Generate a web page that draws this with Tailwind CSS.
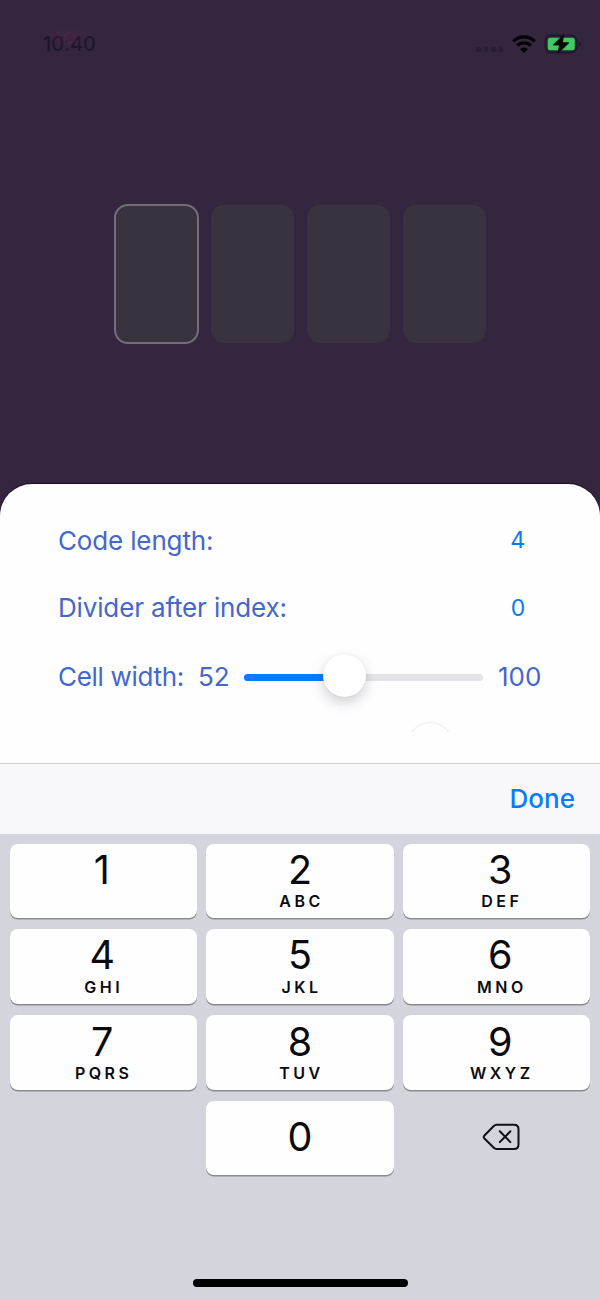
<!DOCTYPE html>
<html lang="en">
<head>
<meta charset="utf-8">
<title>Code field settings</title>
<script src="https://cdn.jsdelivr.net/npm/@tailwindcss/browser@4"></script>
</head>
<body class="h-[1300px] w-[600px] overflow-hidden bg-[#34263f] font-['Inter',sans-serif]">
<div class="flex h-[1300px] flex-col">
  <header class="flex h-[204px] shrink-0 items-start justify-between pt-[32px] pr-[18px] pl-[43px]">
    <div class="relative text-[20px] leading-[24px] font-medium tracking-[-0.1px] text-[#20162a]">10:40
      <svg class="absolute -top-[5px] left-[6px]" width="42" height="20" viewBox="0 0 42 20"><ellipse cx="20" cy="9" rx="19" ry="8" fill="#5b2c48" opacity=".16"/><circle cx="21" cy="10" r="5" fill="none" stroke="#75304b" opacity=".35"/><circle cx="19" cy="15" r="1" fill="#7a2a34" opacity=".6"/></svg>
    </div>
    <div class="flex items-center pt-px">
      <div class="mt-[11px] mr-[9px] flex gap-[3px]">
        <i class="size-[4.5px] rounded-full bg-[#281d32]"></i><i class="size-[4.5px] rounded-full bg-[#281d32]"></i><i class="size-[4.5px] rounded-full bg-[#281d32]"></i><i class="size-[4.5px] rounded-full bg-[#281d32]"></i>
      </div>
      <svg width="24" height="18" viewBox="0 0 24 18"><g fill="none" stroke="#000" stroke-width="3.1"><path d="M1.3 6.300a15.200 15.200 0 0 1 21.400 0"/><path d="M5.200 10.700a9.700 9.700 0 0 1 13.600 0"/></g><path d="M12 17.900 8.100 14a5.600 5.600 0 0 1 7.800 0z"/></svg>
      <svg class="ml-[8px]" width="38" height="22" viewBox="0 0 38 22"><rect x="1.500" y="2.500" width="31" height="17" rx="5" fill="none" stroke="#21182b" stroke-width="1.800"/><path d="M35 8.300c1.600.5 2.100 1.500 2.100 2.700s-.5 2.200-2.100 2.700z" fill="#21182b"/><rect x="3.800" y="4.800" width="27" height="12.400" rx="2.500" fill="#3fcb60"/><path d="M19.500 2 9.700 12h6L14 20 24.500 9.800h-6.200z" fill="#000" stroke="#0b120f" stroke-width="1.200" stroke-linejoin="round"/></svg>
    </div>
  </header>
  <div class="flex h-[280px] shrink-0 items-start gap-[13px] pl-[114px]">
    <div class="-mr-px h-[140px] w-[85px] rounded-[14px] border-2 border-[#736e77] bg-[#38333f]"></div>
    <div class="mt-px h-[138px] w-[83px] rounded-[13px] bg-[#38333f]"></div>
    <div class="mt-px h-[138px] w-[83px] rounded-[13px] bg-[#38333f]"></div>
    <div class="mt-px h-[138px] w-[83px] rounded-[13px] bg-[#38333f]"></div>
  </div>
  <main class="flex h-[279px] shrink-0 flex-col rounded-t-[32px] bg-[#fefdff] pt-[36px] pr-[58px] pl-[58px] text-[26px] leading-[40px] tracking-[-0.15px] text-[#4467ca] shadow-[0_-1px_1px_#1b1125]">
    <div class="flex h-[68px] justify-between pt-px pr-[17px]"><span>Code length:</span><span class="text-[23px] leading-[38px] text-[#087ceb]">4</span></div>
    <div class="flex h-[69px] justify-between pr-[17px]"><span>Divider after index:</span><span class="text-[23px] text-[#087ceb]">0</span></div>
    <div class="flex h-[49px] items-start">
      <span class="w-[140px] tracking-[-0.3px]">Cell width:</span><span class="w-[46px]">52</span>
      <div class="mt-[17px] flex h-[6.500px] w-[239px] items-center rounded-full bg-[#e4e3e7]">
        <div class="h-[6.500px] w-[100px] rounded-l-full bg-[#087cff]"></div>
        <div class="-mt-[3px] -ml-[21px] size-[43px] shrink-0 rounded-full bg-white shadow-[0_6px_14px_rgba(0,0,0,0.18),0_0_2px_rgba(0,0,0,0.08)]"></div>
      </div>
      <span class="ml-[15px] tracking-normal">100</span>
    </div>
    <div class="-mt-[4px] h-[30px] pt-[21px] [clip-path:inset(0_0_0_0)]"><div class="ml-[351px] size-[43px] rounded-full bg-white shadow-[0_0_3px_rgba(0,0,0,0.15)]"></div></div>
  </main>
  <div class="flex h-[71px] shrink-0 items-center justify-end border-t border-[#cfced2] bg-[#f8f7f9] pr-[25px] text-[26px] font-medium text-[#087cff]"><span class="-mt-px">Done</span></div>
  <section class="relative h-[466px] shrink-0 bg-[#d3d4dc] px-[9.500px] pt-[9.500px]">
    <div class="grid grid-cols-3 grid-rows-[74px_75px_75px_74px] gap-x-[9.500px] gap-y-[11.300px] text-center text-[#0b0a0d]">
      <button class="flex flex-col items-center rounded-[8px] bg-[#fefdff] pr-[3px] shadow-[0_1.500px_0_#8b8b91]"><span class="mt-[5px] text-[39.500px] leading-[42px]">1</span></button>
      <button class="flex flex-col items-center rounded-[8px] bg-[#fefdff] shadow-[0_1.500px_0_#8b8b91]"><span class="mt-[5px] text-[39.500px] leading-[42px]">2</span><span class="pl-[3px] text-[16px] leading-[20px] font-semibold tracking-[3.500px]">ABC</span></button>
      <button class="flex flex-col items-center rounded-[8px] bg-[#fefdff] pl-[7px] shadow-[0_1.500px_0_#8b8b91]"><span class="mt-[5px] text-[39.500px] leading-[42px]">3</span><span class="pl-[3px] text-[16px] leading-[20px] font-semibold tracking-[3.500px]">DEF</span></button>
      <button class="flex flex-col items-center rounded-[8px] bg-[#fefdff] pr-[2px] shadow-[0_1.500px_0_#8b8b91]"><span class="mt-[6px] text-[39.500px] leading-[41px]">4</span><span class="pl-[3px] text-[16px] leading-[22px] font-semibold tracking-[3.500px]">GHI</span></button>
      <button class="flex flex-col items-center rounded-[8px] bg-[#fefdff] shadow-[0_1.500px_0_#8b8b91]"><span class="mt-[6px] text-[39.500px] leading-[41px]">5</span><span class="pl-[3px] text-[16px] leading-[22px] font-semibold tracking-[3.500px]">JKL</span></button>
      <button class="flex flex-col items-center rounded-[8px] bg-[#fefdff] pl-[7px] shadow-[0_1.500px_0_#8b8b91]"><span class="mt-[6px] text-[39.500px] leading-[41px]">6</span><span class="pl-[3px] text-[16px] leading-[22px] font-semibold tracking-[3.500px]">MNO</span></button>
      <button class="flex flex-col items-center rounded-[8px] bg-[#fefdff] pr-[2px] shadow-[0_1.500px_0_#8b8b91]"><span class="mt-[6px] text-[39.500px] leading-[42px]">7</span><span class="pl-[3px] text-[16px] leading-[20px] font-semibold tracking-[3.500px]">PQRS</span></button>
      <button class="flex flex-col items-center rounded-[8px] bg-[#fefdff] shadow-[0_1.500px_0_#8b8b91]"><span class="mt-[6px] text-[39.500px] leading-[42px]">8</span><span class="pl-[3px] text-[16px] leading-[20px] font-semibold tracking-[3.500px]">TUV</span></button>
      <button class="flex flex-col items-center rounded-[8px] bg-[#fefdff] pl-[7px] shadow-[0_1.500px_0_#8b8b91]"><span class="mt-[6px] text-[39.500px] leading-[42px]">9</span><span class="pl-[3px] text-[16px] leading-[20px] font-semibold tracking-[3.500px]">WXYZ</span></button>
      <button class="col-start-2 flex flex-col items-center rounded-[8px] bg-[#fefdff] shadow-[0_1.500px_0_#8b8b91]"><span class="mt-[15px] text-[39.500px] leading-[42px]">0</span></button>
      <button class="flex justify-center pt-[21px]" aria-label="Delete"><svg class="ml-[11px]" width="40" height="30" viewBox="0 0 40 30" fill="none" stroke="#111015" stroke-width="2" stroke-linecap="round" stroke-linejoin="round"><path d="M14.500 2.700H32q4.500 0 4.500 4.500v15.300q0 4.500-4.500 4.500H14.500q-1.500 0-2.700-1.200L2.200 16.200q-1-1.200 0-2.400L11.800 4Q13 2.700 14.500 2.700z"/><path d="M17.800 9.300 28.400 20.100M28.400 9.300 17.800 20.100"/></svg></button>
    </div>
    <div class="absolute top-[445px] left-[193px] h-[8px] w-[215px] rounded-full bg-black"></div>
  </section>
</div>
</body>
</html>
